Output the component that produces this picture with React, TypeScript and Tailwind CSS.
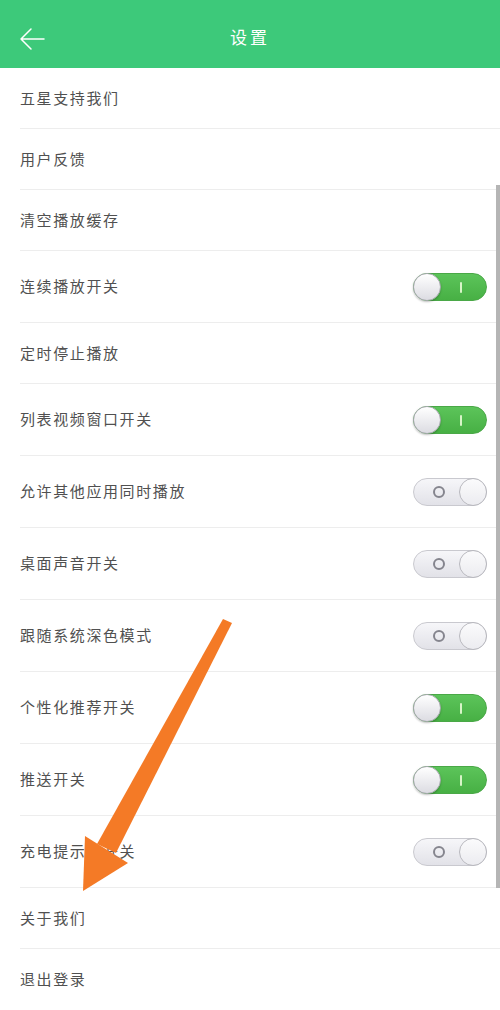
import React from "react";

type Row = { label: string; sw?: "on" | "off" };

const rows: Row[] = [
  { label: "五星支持我们" },
  { label: "用户反馈" },
  { label: "清空播放缓存" },
  { label: "连续播放开关", sw: "on" },
  { label: "定时停止播放" },
  { label: "列表视频窗口开关", sw: "on" },
  { label: "允许其他应用同时播放", sw: "off" },
  { label: "桌面声音开关", sw: "off" },
  { label: "跟随系统深色模式", sw: "off" },
  { label: "个性化推荐开关", sw: "on" },
  { label: "推送开关", sw: "on" },
  { label: "充电提示音开关", sw: "off" },
  { label: "关于我们" },
  { label: "退出登录" },
];

function Toggle({ on }: { on: boolean }) {
  if (on) {
    return (
      <div className="relative h-[28px] w-[74px] rounded-full bg-gradient-to-b from-[#5cc45a] to-[#47b044] border border-[#4aa847]">
        <div className="absolute left-[-1px] top-[-1px] h-[28px] w-[28px] rounded-full bg-gradient-to-b from-[#ffffff] to-[#dcdce2] border border-[#a9a9b0] shadow-[0_1px_2px_rgba(0,0,0,0.25)]" />
        <div className="absolute left-[46px] top-[8px] h-[11px] w-[2px] bg-[#d8f5c8] rounded" />
      </div>
    );
  }
  return (
    <div className="relative h-[28px] w-[74px] rounded-full bg-gradient-to-b from-[#f6f6f9] to-[#e2e2e8] border border-[#c9c9cf]">
      <div className="absolute left-[19px] top-[7px] h-[12px] w-[12px] rounded-full border-2 border-[#85858e]" />
      <div className="absolute right-[-1px] top-[-1px] h-[28px] w-[28px] rounded-full bg-gradient-to-b from-[#fbfbfc] to-[#ececf0] border border-[#b9b9bf]" />
    </div>
  );
}

export default function App() {
  return (
    <div
      className="relative w-[500px] h-[1010px] overflow-hidden bg-white"
      style={{ fontFamily: '"Noto Sans CJK SC", "Noto Sans", sans-serif' }}
    >
      <div className="relative flex h-[68px] items-center justify-center bg-[#3dc97a] pt-[6px]">
        <svg
          className="absolute left-[19px] top-[27px]"
          width="26"
          height="24"
          viewBox="0 0 26 24"
          fill="none"
          stroke="#ffffff"
          strokeWidth="1.5"
          strokeLinecap="round"
          strokeLinejoin="round"
        >
          <path d="M25 12H2M12 2L2 12l10 10" />
        </svg>
        <span className="text-[17px] tracking-[3px] text-white">设置</span>
      </div>
      <div className="flex flex-col">
        {rows.map((r, i) => (
          <div key={i} className="flex flex-col">
            <div
              className={`flex items-center justify-between pl-[20px] pr-[13px] ${
                r.sw ? "h-[71px]" : "h-[60px]"
              }`}
            >
              <span className="text-[15px] tracking-[1.6px] text-[#505050]">{r.label}</span>
              {r.sw && <Toggle on={r.sw === "on"} />}
            </div>
            {i < rows.length - 1 && <div className="ml-[20px] h-px bg-[#ededed]" />}
          </div>
        ))}
      </div>
      <div className="absolute right-0 top-[185px] h-[703px] w-[4px] bg-[#b5b5b5]" />
      <svg
        className="absolute left-0 top-0 pointer-events-none"
        width="500"
        height="1010"
        viewBox="0 0 500 1010"
      >
        <polygon points="223,619 232,623 116,853 97,844" fill="#f47a26" />
        <polygon points="85,836 128,863 83,891" fill="#f47a26" />
      </svg>
    </div>
  );
}
